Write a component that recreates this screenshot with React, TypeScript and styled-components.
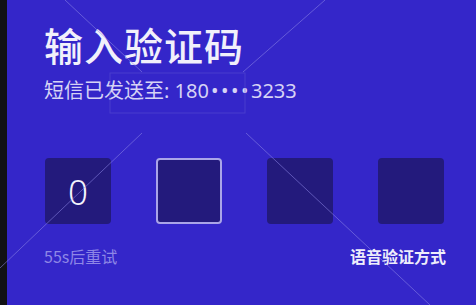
import React from "react"
import styled, {createGlobalStyle} from "styled-components"

const GlobalStyle = createGlobalStyle`
  html, body {
    margin: 0;
    padding: 0;
    background: #3426c9;
  }
  body {
    font-family: "Noto Sans CJK SC", "Noto Sans", sans-serif;
  }
`

const codes = ["0", "", "", ""]

export default function App() {
    return (
        <>
            <GlobalStyle/>
            <Screen>
                <Edge/>
                <Page>
                    <Title>输入验证码</Title>
                    <Subtitle>
                        短信已发送至<Phone>: 180<Mask>••••</Mask>3233</Phone>
                    </Subtitle>
                    <CodeRow>
                        {codes.map((c, i) => (
                            <CodeBox key={i} active={i === 1}>{c}</CodeBox>
                        ))}
                    </CodeRow>
                    <Footer>
                        <Retry>55s后重试</Retry>
                        <Voice>语音验证方式</Voice>
                    </Footer>
                </Page>
                <Watermark viewBox="0 0 476 305" width="476" height="305">
                    <g stroke="#8f88e8" strokeWidth="1" opacity="0.55">
                        <line x1="65" y1="0" x2="142" y2="72"/>
                        <line x1="325" y1="0" x2="243" y2="72"/>
                        <line x1="142" y1="133" x2="0" y2="268"/>
                        <line x1="246" y1="133" x2="430" y2="305"/>
                    </g>
                    <g stroke="#5d53d6" strokeWidth="1" fill="none" opacity="0.5">
                        <rect x="110" y="73" width="135" height="40"/>
                    </g>
                </Watermark>
            </Screen>
        </>
    )
}

const Screen = styled.div`
  position: relative;
  display: flex;
  width: 476px;
  height: 305px;
  overflow: hidden;
  background: #3426c9;
`
const Edge = styled.div`
  width: 7px;
  flex-shrink: 0;
  background: #111114;
`
const Page = styled.div`
  flex: 1;
  display: flex;
  flex-direction: column;
  padding: 21px 30px 0 37px;
`
const Title = styled.div`
  font-size: 39px;
  line-height: 47px;
  font-weight: 500;
  color: #f1f0fb;
  letter-spacing: 1px;
`
const Subtitle = styled.div`
  margin-top: 9px;
  font-size: 20px;
  line-height: 26px;
  color: #d6d3f5;
`
const Phone = styled.span`
  font-family: "Noto Sans", sans-serif;
  font-size: 20px;
`
const Mask = styled.span`
  letter-spacing: 2.5px;
  padding-left: 2px;
`
const CodeRow = styled.div`
  display: flex;
  gap: 45px;
  margin-top: 54px;
  padding-left: 1px;
`
const CodeBox = styled.div<{ active?: boolean }>`
  box-sizing: border-box;
  width: 66px;
  height: 66px;
  border-radius: 4px;
  background: #231a7c;
  border: 2px solid ${p => p.active ? "#aaa5e8" : "transparent"};
  display: flex;
  align-items: center;
  justify-content: center;
  font-family: "Noto Sans", sans-serif;
  font-size: 35px;
  font-weight: 300;
  color: #f4f3fc;
`
const Footer = styled.div`
  display: flex;
  justify-content: space-between;
  margin-top: 21px;
  font-size: 16px;
  line-height: 22px;
`
const Retry = styled.div`
  color: #8e86e6;
`
const Voice = styled.div`
  color: #eeedfb;
  font-weight: 700;
`
const Watermark = styled.svg`
  position: absolute;
  top: 0;
  left: 0;
  pointer-events: none;
`
